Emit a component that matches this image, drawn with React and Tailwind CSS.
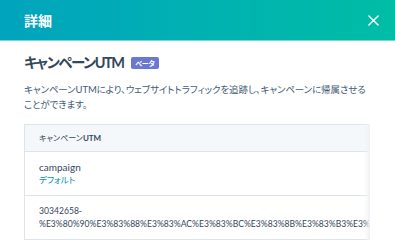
export default function App() {
  const font = { fontFamily: 'Lato, "Noto Sans CJK JP", sans-serif', fontFeatureSettings: '"palt" 1' };
  return (
    <div className="w-[395px] h-[249px] overflow-hidden bg-white text-[#33475b]" style={font}>
      {/* Header */}
      <div className="h-[41px] flex items-center justify-between pl-6 pr-4 bg-gradient-to-r from-[#00a4bd] to-[#00bda5] border-b border-[#7fd1d6]">
        <h1 className="text-[14px] font-bold text-white">詳細</h1>
        <svg width="11" height="11" viewBox="0 0 12 12">
          <path d="M1 1L11 11M11 1L1 11" stroke="white" strokeWidth="1.6" strokeLinecap="round" />
        </svg>
      </div>

      <div className="px-6 pt-[11px]">
        <div className="flex items-center gap-[8px]">
          <h2 className="text-[14.5px] font-bold leading-[22px] tracking-[-1.5px]">キャンペーンUTM</h2>
          <span className="bg-[#6a78d1] text-white text-[7px] font-bold leading-[12px] px-[4px] rounded-[2px] tracking-[-0.3px]">ベータ</span>
        </div>
        <p className="mt-[8px] text-[9.5px] leading-[15px] tracking-[-0.1px] text-[#425b76]">
          キャンペーンUTMにより、ウェブサイトトラフィックを追跡し、キャンペーンに帰属させることができます。
        </p>

        <div className="relative mt-[12px] w-[346px] overflow-hidden">
          <div className="w-[420px] border border-[#dfe3eb]">
            <div className="h-[27px] flex items-center px-[14px] bg-[#f5f8fa] border-b border-[#dfe3eb] text-[8px]">
              キャンペーン<span className="font-bold">UTM</span>
            </div>
            <div className="h-[44px] flex flex-col justify-center px-[14px] border-b border-[#dfe3eb]">
              <div className="text-[10px] leading-[14px]">campaign</div>
              <div className="text-[8.5px] leading-[13px] text-[#0091ae]">デフォルト</div>
            </div>
            <div className="h-[43px] flex flex-col justify-center px-[14px] text-[8.6px] leading-[13px] whitespace-nowrap">
              <div>30342658-</div>
              <div>%E3%80%90%E3%83%88%E3%83%AC%E3%83%BC%E3%83%8B%E3%83%B3%E3%82%B0%E3%80%91</div>
            </div>
          </div>
          <div className="absolute right-0 top-0 bottom-0 w-[6px] bg-gradient-to-r from-transparent to-[#eef2f5]" />
        </div>
      </div>
    </div>
  );
}
